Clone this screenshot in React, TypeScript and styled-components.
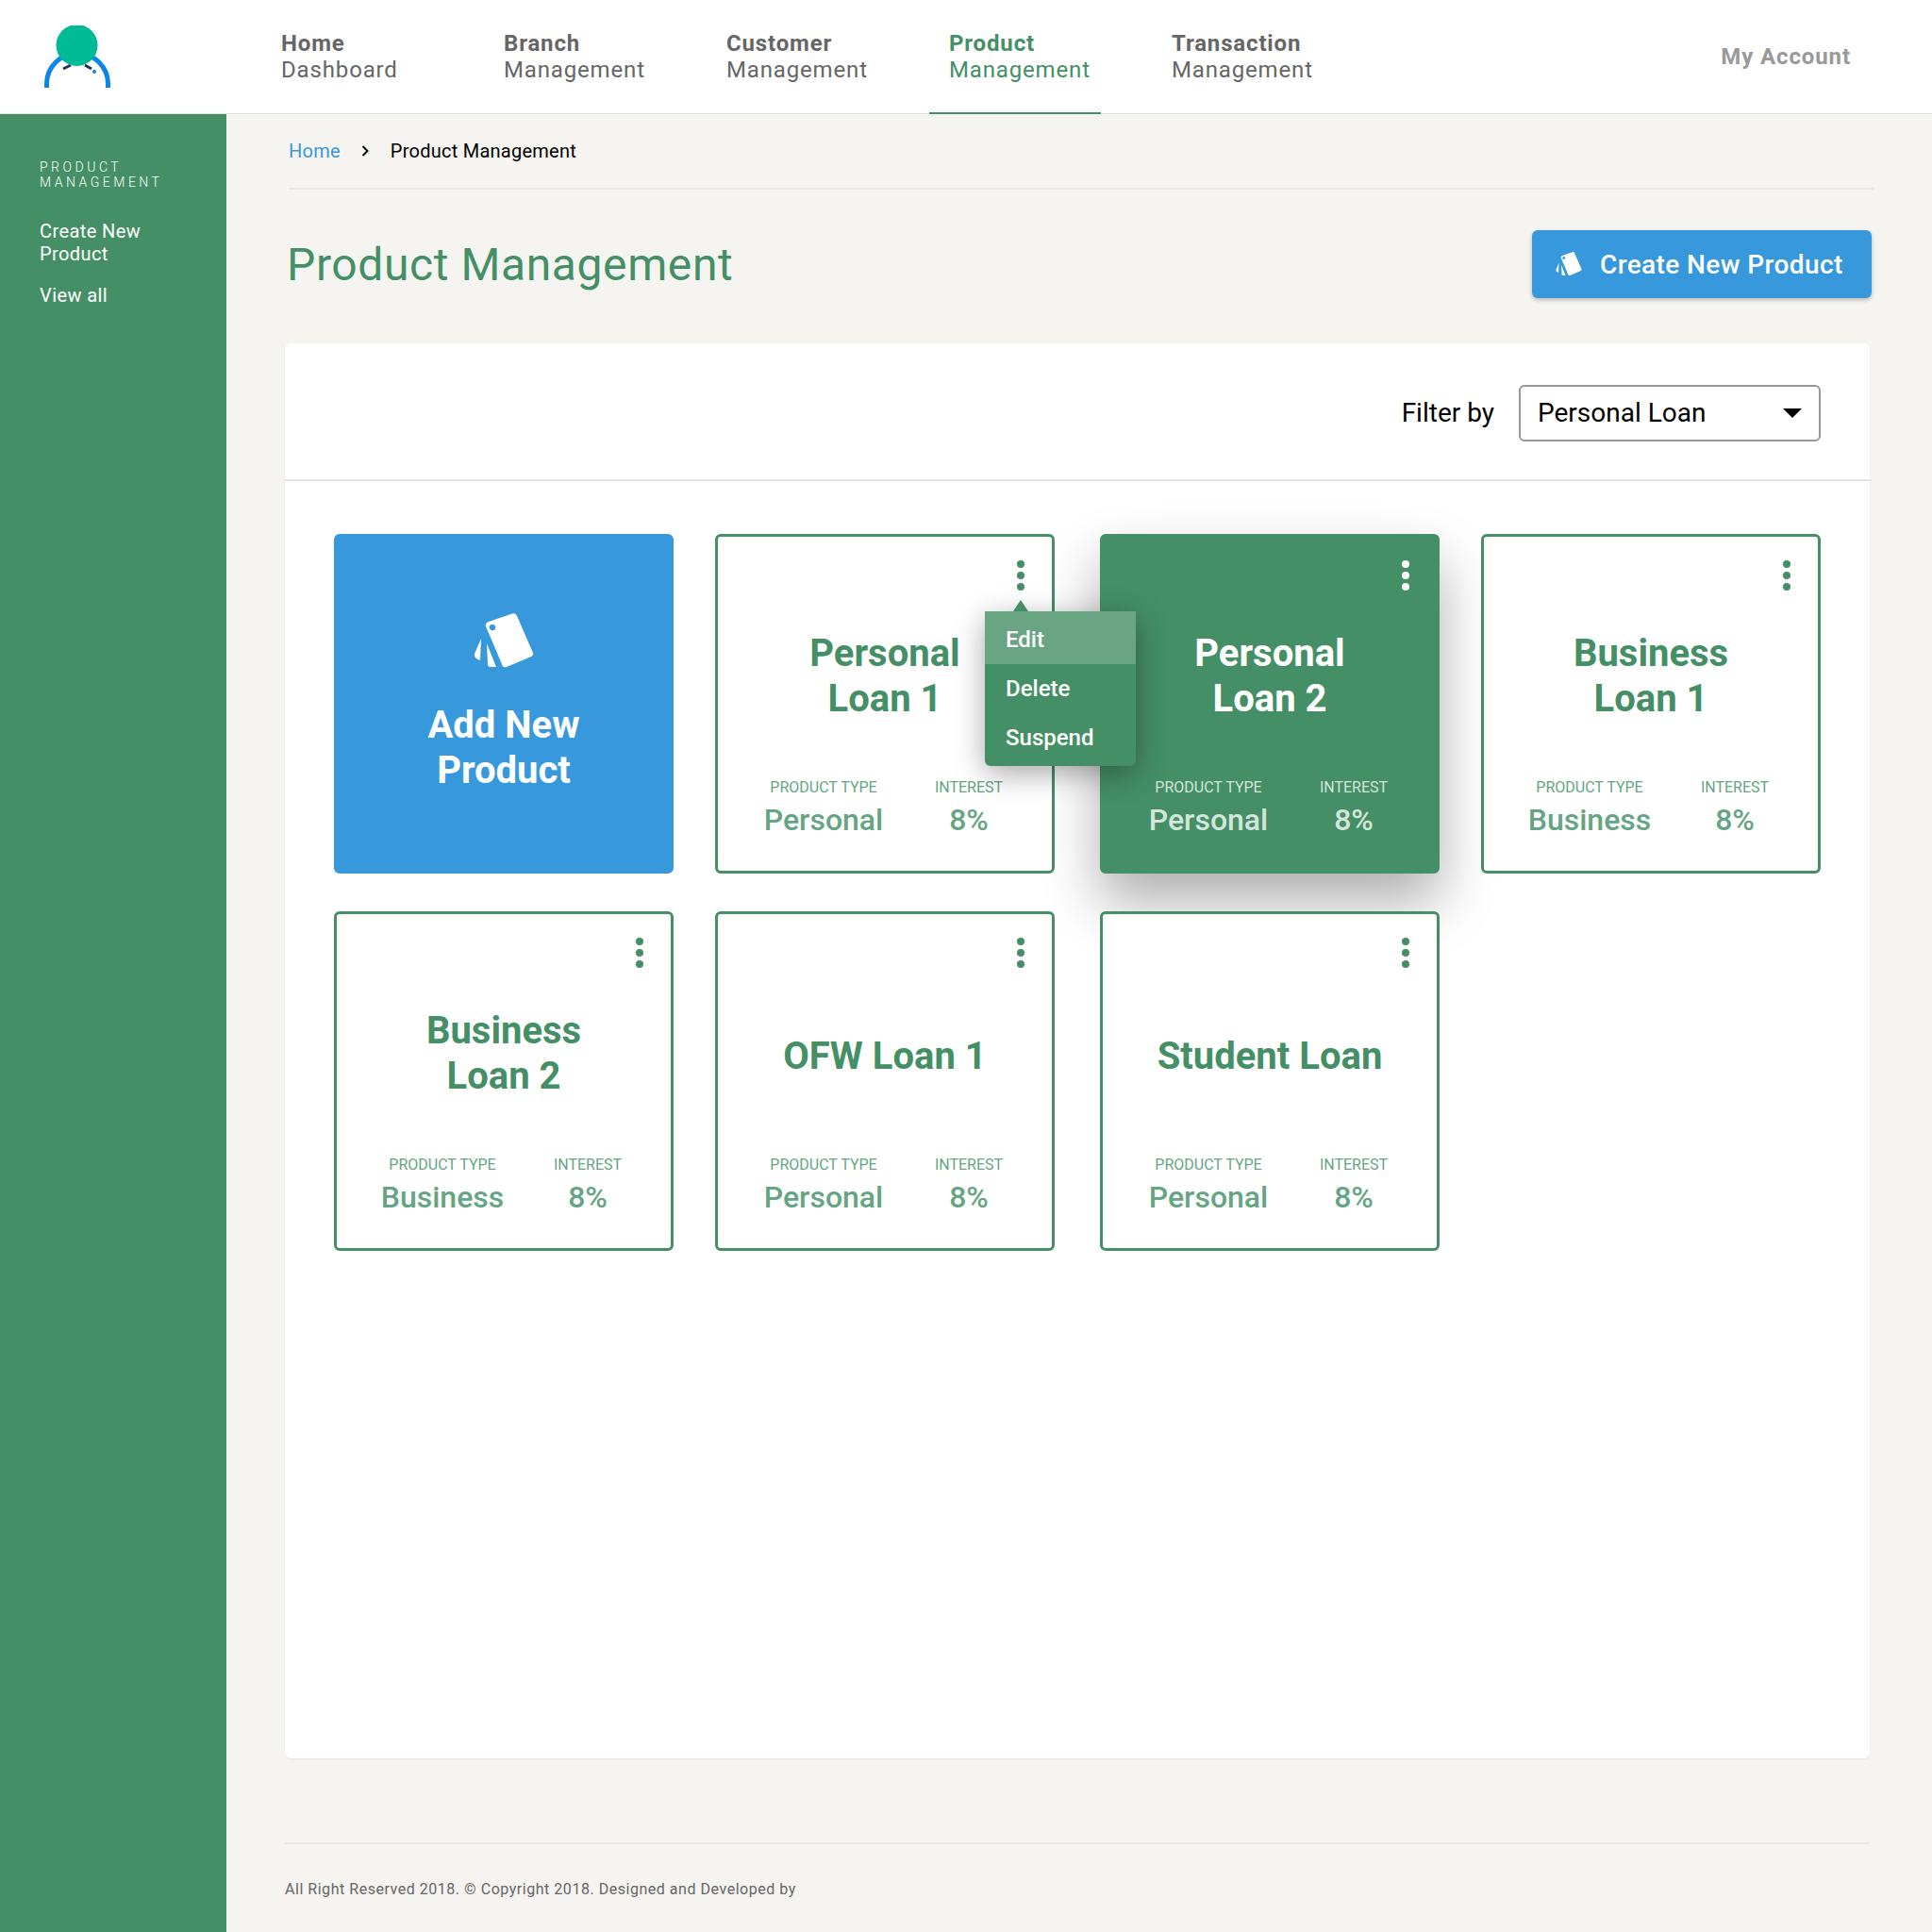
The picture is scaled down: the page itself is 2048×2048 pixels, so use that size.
import styled, { createGlobalStyle } from 'styled-components';

const GREEN = '#448f66';
const BLUE = '#3798dc';

const GlobalStyle = createGlobalStyle`
  html, body {
    margin: 0;
    padding: 0;
    background: #f5f4f1;
  }
  * {
    box-sizing: border-box;
  }
  body {
    font-family: Roboto, "Liberation Sans", sans-serif;
  }
`;

const Page = styled.div`
  width: 2048px;
  height: 2048px;
  display: flex;
  flex-direction: column;
  overflow: hidden;
`;

const Header = styled.header`
  height: 121px;
  flex-shrink: 0;
  display: flex;
  align-items: stretch;
  background: #ffffff;
  border-bottom: 1px solid #dddddb;
`;

const LogoArea = styled.div`
  width: 277px;
  flex-shrink: 0;
  padding: 27px 0 0 47px;
`;

const Nav = styled.nav`
  display: flex;
  gap: 54px;
`;

const NavItem = styled.a<{ $active?: boolean }>`
  width: 182px;
  height: 121px;
  padding: 32px 0 0 21px;
  font-size: 24px;
  line-height: 28px;
  letter-spacing: 0.85px;
  white-space: nowrap;
  color: ${(p) => (p.$active ? GREEN : '#666666')};
  border-bottom: 2px solid ${(p) => (p.$active ? GREEN : 'transparent')};

  strong {
    display: block;
    font-weight: 700;
  }
`;

const Account = styled.a`
  margin-left: auto;
  padding-right: 86px;
  align-self: center;
  font-size: 24px;
  font-weight: 700;
  letter-spacing: 0.9px;
  color: #999999;
`;

const Body = styled.div`
  flex: 1;
  display: flex;
`;

const Sidebar = styled.aside`
  width: 240px;
  flex-shrink: 0;
  background: ${GREEN};
  padding: 48px 20px 0 42px;
  color: #ffffff;
`;

const SideTitle = styled.div`
  font-size: 14px;
  line-height: 16px;
  font-weight: 300;
  letter-spacing: 3.5px;
  text-transform: uppercase;
  margin-bottom: 32px;
`;

const SideLink = styled.a`
  display: block;
  font-size: 20px;
  line-height: 24px;
  letter-spacing: 0.4px;
  margin-bottom: 20px;
`;

const Main = styled.main`
  flex: 1;
  padding: 0 66px 0 62px;
`;

const Breadcrumb = styled.div`
  height: 80px;
  margin: 0 -4px 0 4px;
  padding-bottom: 1px;
  display: flex;
  align-items: center;
  font-size: 20px;
  letter-spacing: 0.25px;
  color: #000000;
  border-bottom: 2px solid #e8e8e4;
`;

const CrumbLink = styled.a`
  color: ${BLUE};
`;

const CrumbArrow = styled.span`
  display: flex;
  margin: 0 20px 0 19px;
`;

const TitleRow = styled.div`
  height: 72px;
  margin: 43px -2px 0 2px;
  display: flex;
  align-items: center;
  justify-content: space-between;
`;

const Title = styled.h1`
  margin: 0;
  font-size: 48px;
  font-weight: 400;
  letter-spacing: 0.6px;
  color: ${GREEN};
`;

const CreateButton = styled.button`
  width: 360px;
  height: 72px;
  padding: 0 0 0 25px;
  display: flex;
  align-items: center;
  gap: 19px;
  border: none;
  border-radius: 6px;
  background: ${BLUE};
  color: #ffffff;
  font-family: inherit;
  font-size: 28px;
  font-weight: 500;
  letter-spacing: 0.4px;
  box-shadow: 0 2px 4px rgba(0, 0, 0, 0.25);
`;

const Panel = styled.section`
  height: 1500px;
  margin-top: 48px;
  background: #ffffff;
  border-radius: 6px;
  box-shadow: 0 1px 2px rgba(0, 0, 0, 0.08);
`;

const FilterBar = styled.div`
  height: 146px;
  margin-right: -2px;
  padding: 3px 54px 0 0;
  display: flex;
  align-items: center;
  justify-content: flex-end;
  gap: 26px;
  font-size: 28px;
  color: #000000;
  border-bottom: 2px solid #e4e4e4;
`;

const Select = styled.div`
  width: 320px;
  height: 60px;
  padding: 0 18px;
  display: flex;
  align-items: center;
  justify-content: space-between;
  border: 2px solid #979797;
  border-radius: 6px;
`;

const Caret = styled.span`
  width: 0;
  height: 0;
  border-left: 10px solid transparent;
  border-right: 10px solid transparent;
  border-top: 10px solid #000000;
`;

const Grid = styled.div`
  padding: 56px 0 0 52px;
  display: grid;
  grid-template-columns: 404px 408px 404px 360px;
  grid-auto-rows: 360px;
  row-gap: 40px;
`;

const variants = {
  outline: { bg: '#ffffff', border: GREEN, color: GREEN, soft: '#65a583', shadow: 'none' },
  filled: { bg: GREEN, border: GREEN, color: '#ffffff', soft: '#d4e6dc', shadow: '0 30px 60px rgba(0, 0, 0, 0.32)' },
  add: { bg: BLUE, border: BLUE, color: '#ffffff', soft: '#ffffff', shadow: 'none' },
};

type Variant = keyof typeof variants;

const Card = styled.article<{ $variant: Variant; $raised?: boolean }>`
  position: relative;
  z-index: ${(p) => (p.$raised ? 2 : 1)};
  width: 360px;
  height: 360px;
  padding-top: 46px;
  border: 3px solid ${(p) => variants[p.$variant].border};
  border-radius: 6px;
  background: ${(p) => variants[p.$variant].bg};
  color: ${(p) => variants[p.$variant].color};
  box-shadow: ${(p) => variants[p.$variant].shadow};
`;

const AddCard = styled(Card)`
  padding-top: 81px;
  display: flex;
  flex-direction: column;
  align-items: center;
  gap: 37px;
`;

const CardName = styled.h2`
  margin: 0;
  font-size: 40px;
  line-height: 48px;
  font-weight: 700;
  text-align: center;
`;

const NameArea = styled.div<{ $single: boolean }>`
  height: 204px;
  padding-top: ${(p) => (p.$single ? 6 : 0)}px;
  display: flex;
  align-items: center;
  justify-content: center;
`;

const Stats = styled.div`
  padding-top: 6px;
  display: grid;
  grid-template-columns: 224px 84px;
  text-align: center;
  white-space: nowrap;
`;

const StatLabel = styled.div<{ $variant: Variant }>`
  font-size: 16px;
  line-height: 20px;
  color: ${(p) => variants[p.$variant].soft};
`;

const StatValue = styled.div<{ $variant: Variant }>`
  margin-top: 4px;
  font-size: 32px;
  line-height: 40px;
  font-weight: 500;
  color: ${(p) => variants[p.$variant].soft};
`;

const Kebab = styled.svg`
  position: absolute;
  top: 24px;
  right: 28px;
`;

const Menu = styled.div`
  position: absolute;
  top: 79px;
  left: 283px;
  z-index: 3;
  width: 160px;
  height: 164px;
  background: ${GREEN};
  border-radius: 0 0 6px 6px;
  color: #ffffff;
  font-size: 24px;
  font-weight: 500;
  box-shadow: 0 8px 32px rgba(0, 0, 0, 0.35);

  &::before {
    content: '';
    position: absolute;
    top: -12px;
    left: 30px;
    border-left: 8px solid transparent;
    border-right: 8px solid transparent;
    border-bottom: 12px solid ${GREEN};
  }
`;

const MenuRow = styled.div<{ $hover?: boolean; $edge?: 'first' | 'last' }>`
  height: ${(p) => (p.$edge ? 56 : 52)}px;
  padding: ${(p) => (p.$edge === 'first' ? '4px' : '0')} 0 ${(p) => (p.$edge === 'last' ? '4px' : '0')} 22px;
  display: flex;
  align-items: center;
  background: ${(p) => (p.$hover ? '#69a583' : 'transparent')};
`;

const Footer = styled.footer`
  margin-top: 89px;
  padding-top: 38px;
  border-top: 2px solid #e8e8e4;
  font-size: 16px;
  line-height: 20px;
  letter-spacing: 0.53px;
  color: #666666;
`;

function TagIcon({ size }: { size: number }) {
  return (
    <svg width={size} height={(size * 58) / 64} viewBox="0 0 64 58" fill="#ffffff">
      <path
        fillRule="evenodd"
        d="M16 9L41 .5Q45-.5 46 3L63 42Q64 45 60 46.5L35 57Q31 58 30 54L13 14Q12 10.5 16 9ZM20 11.7a3.3 3.3 0 1 0 .01 0Z"
      />
      <path d="M8 27L1 43Q0 48 7 50Z" />
      <path d="M14 32L24 57H18Q15 57 15 54Z" />
    </svg>
  );
}

function Logo() {
  return (
    <svg width="72" height="68" viewBox="0 0 72 68">
      <path d="M2.5 66V62A32.5 32.5 0 0 1 67.5 62V66" fill="none" stroke="#0b85e8" strokeWidth="5" />
      <path d="M20 46L28 42M43 42L50 46" fill="none" stroke="#1f2f6b" strokeWidth="3" />
      <circle cx="53" cy="49" r="2" fill="#0b85e8" />
      <circle cx="34.5" cy="21" r="22" fill="#00bb96" />
    </svg>
  );
}

const products = [
  { name: ['Personal', 'Loan 1'], type: 'Personal', menu: true },
  { name: ['Personal', 'Loan 2'], type: 'Personal', filled: true },
  { name: ['Business', 'Loan 1'], type: 'Business' },
  { name: ['Business', 'Loan 2'], type: 'Business' },
  { name: ['OFW Loan 1'], type: 'Personal' },
  { name: ['Student Loan'], type: 'Personal' },
];

const navItems = [
  ['Home', 'Dashboard'],
  ['Branch', 'Management'],
  ['Customer', 'Management'],
  ['Product', 'Management'],
  ['Transaction', 'Management'],
];

export default function App() {
  return (
    <Page>
      <GlobalStyle />
      <Header>
        <LogoArea>
          <Logo />
        </LogoArea>
        <Nav>
          {navItems.map(([top, bottom]) => (
            <NavItem key={top} $active={top === 'Product'}>
              <strong>{top}</strong>
              {bottom}
            </NavItem>
          ))}
        </Nav>
        <Account>My Account</Account>
      </Header>
      <Body>
        <Sidebar>
          <SideTitle>
            Product
            <br />
            Management
          </SideTitle>
          <SideLink>
            Create New
            <br />
            Product
          </SideLink>
          <SideLink>View all</SideLink>
        </Sidebar>
        <Main>
          <Breadcrumb>
            <CrumbLink>Home</CrumbLink>
            <CrumbArrow>
              <svg width="14" height="14" viewBox="0 0 14 14" fill="none" stroke="#000000" strokeWidth="2">
                <path d="M4.5 2L9.5 7L4.5 12" />
              </svg>
            </CrumbArrow>
            Product Management
          </Breadcrumb>
          <TitleRow>
            <Title>Product Management</Title>
            <CreateButton>
              <TagIcon size={28} />
              Create New Product
            </CreateButton>
          </TitleRow>
          <Panel>
            <FilterBar>
              Filter by
              <Select>
                Personal Loan
                <Caret />
              </Select>
            </FilterBar>
            <Grid>
              <AddCard $variant="add">
                <TagIcon size={64} />
                <CardName>
                  Add New
                  <br />
                  Product
                </CardName>
              </AddCard>
              {products.map((product) => {
                const variant: Variant = product.filled ? 'filled' : 'outline';
                return (
                  <Card key={product.name.join(' ')} $variant={variant} $raised={product.menu}>
                    <Kebab width="10" height="34" viewBox="0 0 10 34" fill={product.filled ? '#ffffff' : GREEN}>
                      <circle cx="5" cy="5" r="4" />
                      <circle cx="5" cy="17" r="4" />
                      <circle cx="5" cy="29" r="4" />
                    </Kebab>
                    <NameArea $single={product.name.length === 1}>
                      <CardName>
                        {product.name.map((line, index) => (
                          <span key={line}>
                            {index > 0 && <br />}
                            {line}
                          </span>
                        ))}
                      </CardName>
                    </NameArea>
                    <Stats>
                      <StatLabel $variant={variant}>PRODUCT TYPE</StatLabel>
                      <StatLabel $variant={variant}>INTEREST</StatLabel>
                      <StatValue $variant={variant}>{product.type}</StatValue>
                      <StatValue $variant={variant}>8%</StatValue>
                    </Stats>
                    {product.menu && (
                      <Menu>
                        <MenuRow $hover $edge="first">Edit</MenuRow>
                        <MenuRow>Delete</MenuRow>
                        <MenuRow $edge="last">Suspend</MenuRow>
                      </Menu>
                    )}
                  </Card>
                );
              })}
            </Grid>
          </Panel>
          <Footer>All Right Reserved 2018. © Copyright 2018. Designed and Developed by</Footer>
        </Main>
      </Body>
    </Page>
  );
}
